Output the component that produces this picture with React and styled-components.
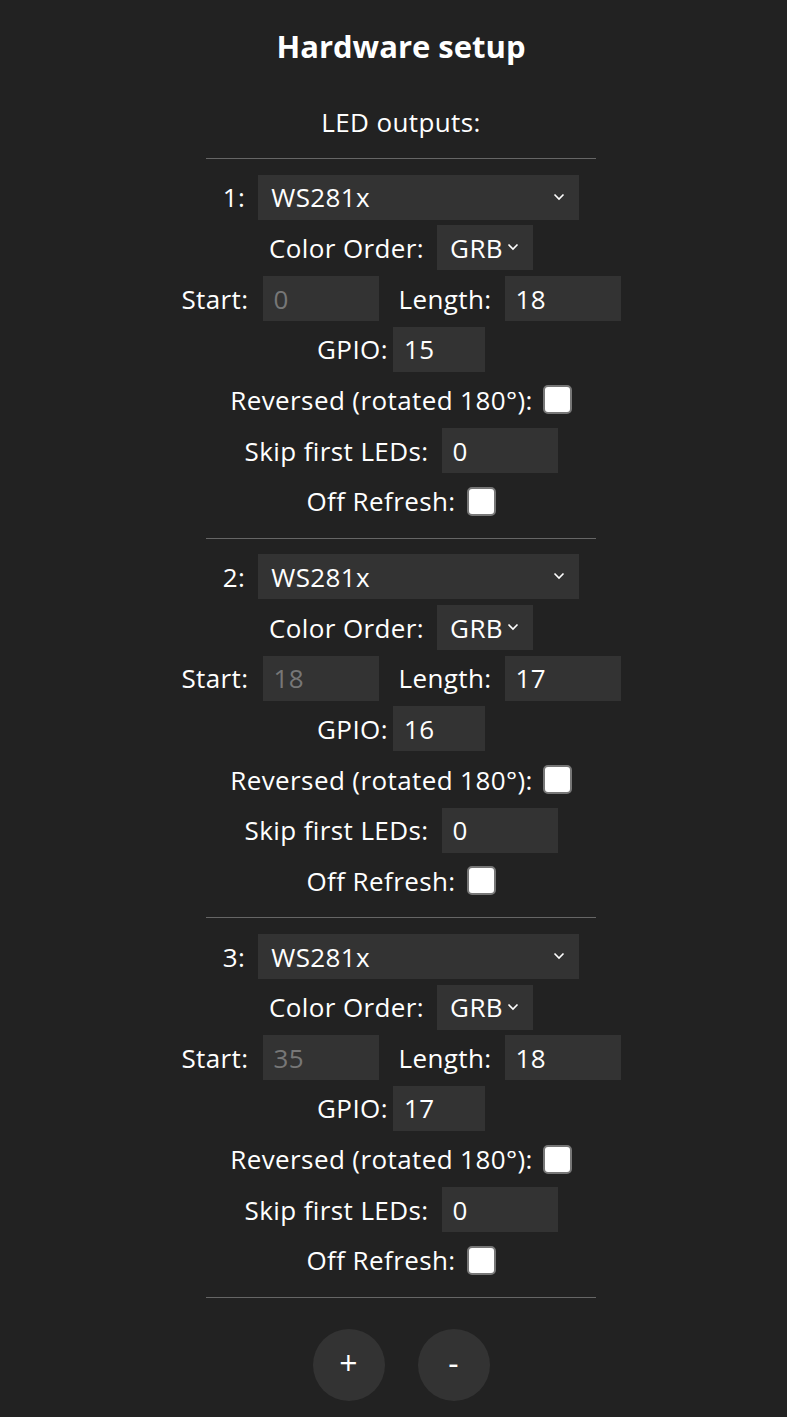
import React from 'react'
import styled, { createGlobalStyle } from 'styled-components'

const GlobalStyle = createGlobalStyle`
    html, body {
        margin: 0;
        padding: 0;
        background: #222;
    }
    body {
        font-family: "Open Sans", "Noto Sans", sans-serif;
        color: #fff;
    }
`

const Page = styled.div`
    display: flex;
    flex-direction: column;
    align-items: center;
    padding: 31px 0 40px 15px;
    min-height: 1417px;
    box-sizing: border-box;
    background: #222;
`

const Title = styled.h2`
    margin: 0;
    font-size: 31px;
    line-height: 30px;
    font-weight: 700;
`

const Subtitle = styled.div`
    margin-top: 36px;
    font-size: 26px;
    letter-spacing: 0.4px;
    line-height: 50px;
`

const Rule = styled.hr`
    width: 390px;
    margin: ${p => p.$top ?? 12}px 0 ${p => p.$bottom ?? 13}px;
    border: 0;
    border-top: 1px solid #666;
`

const Row = styled.div`
    display: flex;
    align-items: center;
    justify-content: center;
    height: 50.67px;
    font-size: 26px;
    letter-spacing: 0.4px;
`

const Label = styled.span`
    margin-right: ${p => p.$gap ?? 13}px;
    margin-left: ${p => p.$lead ?? 0}px;
    white-space: pre;
`

const Field = styled.input`
    width: ${p => p.$w}px;
    height: 45px;
    box-sizing: border-box;
    border: 0;
    border-radius: 0;
    background: #333;
    color: #fff;
    font: inherit;
    letter-spacing: inherit;
    padding: 0 11px;
    outline: none;

    &:disabled {
        color: #777;
    }
`

const SelectWrap = styled.div`
    position: relative;
    width: ${p => p.$w}px;
    height: 45px;
`

const Select = styled.select`
    appearance: none;
    width: 100%;
    height: 100%;
    border: 0;
    border-radius: 0;
    background: #333;
    color: #fff;
    font: inherit;
    letter-spacing: inherit;
    padding: 0 0 0 ${p => p.$pad ?? 13}px;
    outline: none;
`

const Chevron = styled.svg`
    position: absolute;
    right: ${p => p.$right}px;
    top: 18px;
    width: 12px;
    height: 8px;
    pointer-events: none;
`

const Check = styled.input.attrs({ type: 'checkbox' })`
    appearance: none;
    margin: 0;
    width: 29px;
    height: 29px;
    box-sizing: border-box;
    background: #fff;
    border: 2px solid #777;
    border-radius: 5px;
`

const Buttons = styled.div`
    display: flex;
    gap: 33px;
    margin-top: 31px;
`

const RoundBtn = styled.button`
    width: 72px;
    height: 72px;
    border-radius: 50%;
    border: 0;
    background: #333;
    color: #fff;
    font-family: "Open Sans", sans-serif;
    font-size: 32px;
    line-height: 1;
    padding: 0 0 4px;
`

function Dropdown({ width, value, pad, right, children }) {
    return (
        <SelectWrap $w={width}>
            <Select defaultValue={value} $pad={pad}>{children}</Select>
            <Chevron $right={right} viewBox="0 0 12 8">
                <path d="M1.5 1.5 L6 6 L10.5 1.5" fill="none" stroke="#fff" strokeWidth="1.6" />
            </Chevron>
        </SelectWrap>
    )
}

const outputs = [
    { start: 0, length: 18, gpio: 15 },
    { start: 18, length: 17, gpio: 16 },
    { start: 35, length: 18, gpio: 17 },
]

function Output({ index, start, length, gpio }) {
    return (
        <>
            <Row>
                <Label>{index}:</Label>
                <Dropdown width={321} value="ws" right={14}>
                    <option value="ws">WS281x</option>
                </Dropdown>
            </Row>
            <Row>
                <Label>Color Order:</Label>
                <Dropdown width={96} value="grb" right={14}>
                    <option value="grb">GRB</option>
                </Dropdown>
            </Row>
            <Row>
                <Label $gap={14}>Start:</Label>
                <Field $w={116} defaultValue={start} disabled />
                <Label $lead={20}>Length:</Label>
                <Field $w={116} defaultValue={length} />
            </Row>
            <Row>
                <Label $gap={5}>GPIO:</Label>
                <Field $w={92} defaultValue={gpio} />
            </Row>
            <Row>
                <Label $gap={10}>Reversed (rotated 180°):</Label>
                <Check />
            </Row>
            <Row>
                <Label>Skip first LEDs:</Label>
                <Field $w={116} defaultValue={0} />
            </Row>
            <Row>
                <Label $gap={11}>Off Refresh:</Label>
                <Check />
            </Row>
        </>
    )
}

export default function App() {
    return (
        <>
            <GlobalStyle />
            <Page>
                <Title>Hardware setup</Title>
                <Subtitle>LED outputs:</Subtitle>
                <Rule $top={11} />
                {outputs.map((o, i) => (
                    <React.Fragment key={i}>
                        <Output index={i + 1} {...o} />
                        <Rule $top={11} $bottom={i === outputs.length - 1 ? 0 : 13} />
                    </React.Fragment>
                ))}
                <Buttons>
                    <RoundBtn>+</RoundBtn>
                    <RoundBtn>-</RoundBtn>
                </Buttons>
            </Page>
        </>
    )
}
